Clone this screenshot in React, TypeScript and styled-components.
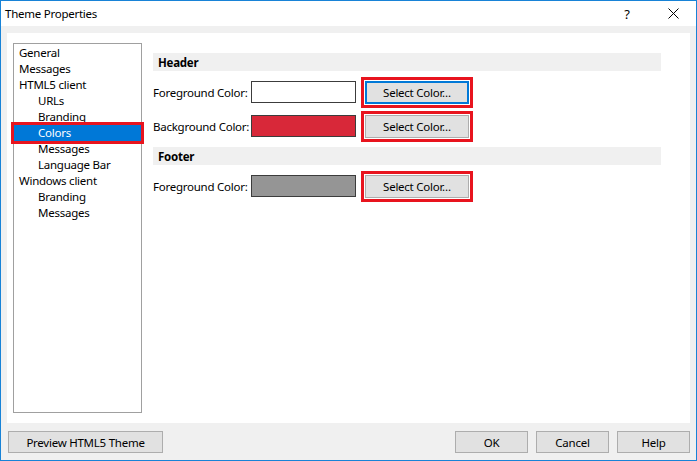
import React from 'react'
import styled, { createGlobalStyle, css } from 'styled-components'

const GlobalStyle = createGlobalStyle`
  html, body {
    margin: 0;
    padding: 0;
    background: #ffffff;
  }
  body {
    font-family: "Noto Sans", "Open Sans", sans-serif;
    font-size: 11.5px;
    letter-spacing: -0.25px;
    color: #000000;
  }
  * {
    box-sizing: border-box;
  }
`

const Window = styled.div`
  width: 697px;
  height: 461px;
  border: 1px solid #1883d7;
  display: flex;
  flex-direction: column;
  background: #f0f0f0;
`

const TitleBar = styled.div`
  height: 25px;
  background: #ffffff;
  display: flex;
  align-items: center;
  padding-left: 4px;
  font-size: 11.5px;
`

const Title = styled.span`
  flex: 1;
`

const TitleButton = styled.span`
  width: 46px;
  height: 25px;
  display: flex;
  align-items: center;
  justify-content: center;
  font-size: 13px;
`

const Body = styled.div`
  flex: 1;
  display: flex;
  flex-direction: column;
  padding: 7px 6px 7px 6px;
`

const Panel = styled.div`
  flex: 1;
  background: #ffffff;
  display: flex;
  padding: 10px 29px 10px 6px;
  gap: 11px;
`

const Tree = styled.ul`
  list-style: none;
  margin: 0;
  padding: 1px 0 0 0;
  width: 129px;
  flex-shrink: 0;
  border: 1px solid #a0a0a0;
`

const TreeItem = styled.li<{ level: number; selected?: boolean }>`
  height: 16px;
  line-height: 16px;
  padding-left: ${({ level }) => 5 + level * 19}px;
  white-space: nowrap;

  ${({ selected }) => selected && css`
    background: #0078d7;
    color: #ffffff;
    outline: 3px solid #e8141e;
  `};
`

const Content = styled.div`
  flex: 1;
  display: flex;
  flex-direction: column;
  padding-top: 10px;
  gap: 4px;
`

const SectionBand = styled.div`
  height: 18px;
  background: #f0f0f0;
  display: flex;
  align-items: center;
  padding-left: 5px;
  font-weight: bold;
`

const Row = styled.div`
  height: 34px;
  display: flex;
  align-items: center;
  margin-top: -4px;

  ${SectionBand} + & {
    margin-top: 0;
  }
`

const Label = styled.span`
  width: 98px;
  flex-shrink: 0;
  white-space: nowrap;
`

const Swatch = styled.div<{ color: string }>`
  width: 105px;
  height: 22px;
  flex-shrink: 0;
  border: 1px solid #3c3c3c;
  background: ${({ color }) => color};
  margin-right: 5px;
`

const Highlight = styled.div`
  border: 3px solid #e8141e;
  padding: 1px;
  flex-shrink: 0;
`

const Button = styled.button<{ width?: number; focused?: boolean }>`
  font-family: inherit;
  font-size: inherit;
  letter-spacing: inherit;
  color: #000000;
  background: #e1e1e1;
  border: 1px solid #adadad;
  height: 22px;
  width: ${({ width }) => width ?? 73}px;
  padding: 0;
  margin: 0;
  white-space: nowrap;

  ${({ focused }) => focused && css`
    border: 2px solid #0078d7;
  `};
`

const SelectButton = styled(Button)`
  height: 23px;
`

const Footer = styled.div`
  display: flex;
  align-items: center;
  margin-top: 8px;
  height: 22px;
  padding-left: 1px;
  gap: 8px;
`

const Spacer = styled.div`
  flex: 1;
`

const treeItems = [
  { label: 'General', level: 0 },
  { label: 'Messages', level: 0 },
  { label: 'HTML5 client', level: 0 },
  { label: 'URLs', level: 1 },
  { label: 'Branding', level: 1 },
  { label: 'Colors', level: 1, selected: true },
  { label: 'Messages', level: 1 },
  { label: 'Language Bar', level: 1 },
  { label: 'Windows client', level: 0 },
  { label: 'Branding', level: 1 },
  { label: 'Messages', level: 1 },
]

const sections = [
  {
    title: 'Header',
    rows: [
      { label: 'Foreground Color:', color: '#ffffff', focused: true },
      { label: 'Background Color:', color: '#d82839' },
    ],
  },
  {
    title: 'Footer',
    rows: [{ label: 'Foreground Color:', color: '#959595' }],
  },
]

const App = () => (
  <>
    <GlobalStyle />
    <Window>
      <TitleBar>
        <Title>Theme Properties</Title>
        <TitleButton>?</TitleButton>
        <TitleButton>
          <svg width="11" height="11" viewBox="0 0 11 11">
            <path d="M0.5 0.5 L10.5 10.5 M10.5 0.5 L0.5 10.5" stroke="#000" strokeWidth="1" />
          </svg>
        </TitleButton>
      </TitleBar>
      <Body>
        <Panel>
          <Tree>
            {treeItems.map((item, i) => (
              <TreeItem key={i} level={item.level} selected={item.selected}>
                {item.label}
              </TreeItem>
            ))}
          </Tree>
          <Content>
            {sections.map(section => (
              <React.Fragment key={section.title}>
                <SectionBand>{section.title}</SectionBand>
                {section.rows.map((row, i) => (
                  <Row key={i}>
                    <Label>{row.label}</Label>
                    <Swatch color={row.color} />
                    <Highlight>
                      <SelectButton width={104} focused={row.focused}>Select Color…</SelectButton>
                    </Highlight>
                  </Row>
                ))}
              </React.Fragment>
            ))}
          </Content>
        </Panel>
        <Footer>
          <Button width={155}>Preview HTML5 Theme</Button>
          <Spacer />
          <Button>OK</Button>
          <Button>Cancel</Button>
          <Button>Help</Button>
        </Footer>
      </Body>
    </Window>
  </>
)

export default App
